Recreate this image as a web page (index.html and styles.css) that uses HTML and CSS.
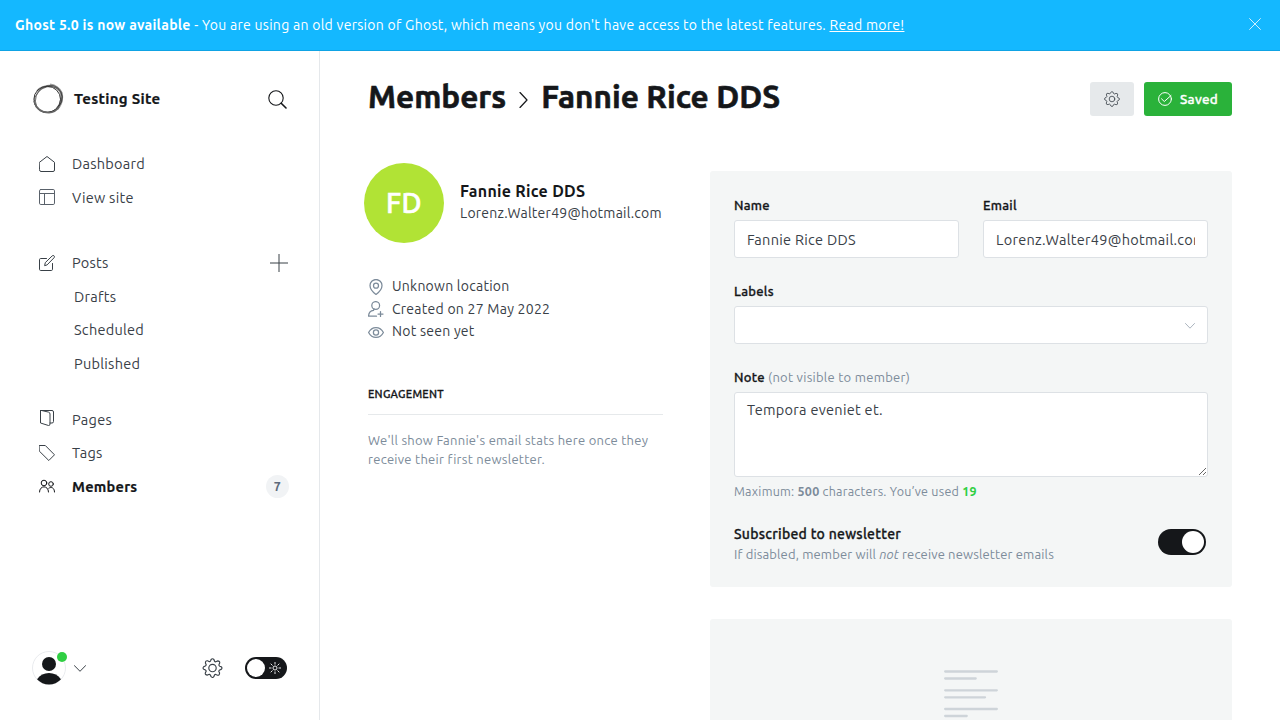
FILE: index.html
```html
<!DOCTYPE html>
<html lang="en">
<head>
<meta charset="utf-8">
<title>Members - Testing Site</title>
<link rel="stylesheet" href="styles.css">
</head>
<body>
<div class="banner">
  <p class="banner-text"><strong>Ghost 5.0 is now available</strong><span> - You are using an old version of Ghost, which means you don't have access to the latest features. </span><a href="#">Read more!</a></p>
  <svg class="banner-close" viewBox="0 0 12 12"><path d="M.3.3l11.4 11.4M11.7.3L.3 11.7"/></svg>
</div>
<div class="app">
  <nav class="sidebar">
    <div class="site">
      <svg class="site-logo" viewBox="0 0 32 32"><g fill="none" stroke="#333"><path d="M18 1.800Q26 3 29.300 10Q31.200 19 25 26" stroke="#999" stroke-width="2.800"/><path d="M5 8Q9 3 20 2.500" stroke="#999" stroke-width="2"/><ellipse cx="15.200" cy="16.300" rx="13.300" ry="13" stroke-width="1"/><ellipse cx="16.600" cy="15.500" rx="12.600" ry="14.400" stroke-width=".6" transform="rotate(40 16 16)"/><ellipse cx="16" cy="16.600" rx="14.500" ry="12.400" stroke-width=".6" transform="rotate(-32 16 16)"/><path d="M2 18Q5.500 29.500 17 29.700Q23 29.500 27 24" stroke="#666" stroke-width="1.600"/></g></svg>
      <span class="site-name">Testing Site</span>
      <svg class="icon search" viewBox="0 0 19 19"><circle cx="8" cy="8" r="7.200"/><path d="M13.200 13.200L18 18" stroke-width="1.600"/></svg>
    </div>
    <ul class="nav">
      <li><svg class="icon" viewBox="0 0 16 16"><path d="M.5 6.300L8 .5l7.500 5.800V14a1.500 1.500 0 0 1-1.500 1.500H2A1.500 1.500 0 0 1 .5 14z"/></svg><span>Dashboard</span></li>
      <li><svg class="icon view" viewBox="0 0 16 16"><rect x=".5" y=".5" width="15" height="15" rx="1.300"/><path d="M.5 4.500h15M5.500 4.500v11"/></svg><span>View site</span></li>
    </ul>
    <ul class="nav">
      <li><svg class="icon" viewBox="0 0 16 16"><path d="M7.500 3.500H1.700A1.200 1.200 0 0 0 .5 4.700v9.600a1.200 1.200 0 0 0 1.200 1.200h10.600a1.200 1.200 0 0 0 1.200-1.200V8.500M5.700 10.300l.6-2.700L13.200.9a1.200 1.200 0 0 1 1.900 1.800L8.400 9.600z"/></svg><span>Posts</span><svg class="icon plus" viewBox="0 0 18 18"><path d="M9 0v18M0 9h18"/></svg></li>
      <li class="sub">Drafts</li>
      <li class="sub">Scheduled</li>
      <li class="sub">Published</li>
    </ul>
    <ul class="nav nav-last">
      <li><svg class="icon pages" viewBox="0 0 16 16"><path d="M1.500.5H13A1.500 1.500 0 0 1 14.500 2v9.500A1.500 1.500 0 0 1 13 13h-2M1.500.5V13l8 2.500q1.500.2 1.500-1.500V4Q11 2.500 9.500 2.100L3 .6"/></svg><span>Pages</span></li>
      <li><svg class="icon" viewBox="0 0 16 16"><path d="M.5.5h5.800l9.200 9.300-5.700 5.700L.5 6.300z"/></svg><span>Tags</span></li>
      <li class="active"><svg class="icon" viewBox="0 0 16 16"><circle cx="5" cy="5" r="2.800"/><circle cx="12" cy="6" r="2.300"/><path d="M.5 14c0-7 9-7 9 0M9.800 10.200c3-2 5.700 0 5.700 3.800"/></svg><span>Members</span><b class="count">7</b></li>
    </ul>
    <div class="user-bar">
      <div class="user"><svg viewBox="0 0 34 34"><circle cx="17" cy="17" r="16.500" fill="#fff" stroke="#e9ebee"/><circle cx="17" cy="13" r="7" fill="#15171a"/><path d="M5 28.300Q9.500 22 17 22t12 6.300A16.300 16.300 0 0 1 5 28.300z" fill="#15171a"/></svg><i class="online"></i></div>
      <svg class="icon chevron" viewBox="0 0 12 7"><path d="M.3.5L6 6.300 11.700.5"/></svg>
      <svg class="icon gear" viewBox="0 0 20 20"><circle cx="10" cy="10" r="3.700"/><path d="M8.600 1.500Q10 0 11.400 1.500L12 3.200Q12.700 4.200 13.800 3.500L15 2.900Q17.500 3 17.200 5L16.500 6.500Q16 7.500 17.200 8.200L18.700 8.800Q20.200 10 18.700 11.400L17.200 12Q16 12.700 16.500 13.800L17.100 15Q17 17.500 15 17.200L13.500 16.500Q12.500 16 11.900 17.200L11.300 18.700Q10 20.200 8.600 18.700L8 17.200Q7.300 16 6.200 16.500L5 17.100Q2.500 17 2.800 15L3.500 13.500Q4 12.500 2.800 11.900L1.300 11.300Q-.2 10 1.300 8.600L2.800 8Q4 7.300 3.500 6.200L2.900 5Q3 2.500 5 2.800L6.500 3.500Q7.500 4 8.100 2.800z"/></svg>
      <div class="theme-switch"><i></i><svg viewBox="0 0 12 12"><circle cx="6" cy="6" r="2"/><path d="M6 0v2.500M6 9.500V12M0 6h2.500M9.500 6H12M1.700 1.700l1.800 1.800M8.500 8.500l1.800 1.800M10.300 1.700L8.500 3.500M3.500 8.500l-1.800 1.800"/></svg></div>
    </div>
  </nav>
  <main class="content">
    <header class="page-head">
      <h1><span>Members</span><svg class="icon crumb" viewBox="0 0 9 16"><path d="M1 .5l7 7.500-7 7.500"/></svg><span>Fannie Rice DDS</span></h1>
      <button class="btn settings"><svg class="icon" viewBox="0 0 20 20"><circle cx="10" cy="10" r="3.500"/><path d="M8.600 1.500Q10 0 11.400 1.500L12 3.200Q12.700 4.200 13.800 3.500L15 2.900Q17.500 3 17.200 5L16.500 6.500Q16 7.500 17.200 8.200L18.700 8.800Q20.200 10 18.700 11.400L17.200 12Q16 12.700 16.500 13.800L17.100 15Q17 17.500 15 17.200L13.500 16.500Q12.500 16 11.900 17.200L11.300 18.700Q10 20.200 8.600 18.700L8 17.200Q7.300 16 6.200 16.500L5 17.100Q2.500 17 2.800 15L3.500 13.500Q4 12.500 2.800 11.900L1.300 11.300Q-.2 10 1.300 8.600L2.800 8Q4 7.300 3.500 6.200L2.900 5Q3 2.500 5 2.800L6.500 3.500Q7.500 4 8.100 2.800z"/></svg></button>
      <button class="btn saved"><svg class="icon" viewBox="0 0 14 14"><circle cx="7" cy="7" r="6.400"/><path d="M3.500 6.800L6.300 9.500 13 3.500"/></svg><span>Saved</span></button>
    </header>
    <div class="columns">
      <aside class="profile">
        <div class="identity">
          <div class="avatar">FD</div>
          <div><h3>Fannie Rice DDS</h3><p>Lorenz.Walter49@hotmail.com</p></div>
        </div>
        <ul class="facts">
          <li><svg class="icon" viewBox="0 0 16 16"><path d="M8 15.500C6 14 2 10 2 6.500a6 6 0 0 1 12 0C14 10 10 14 8 15.500z"/><circle cx="8" cy="6.700" r="2.500"/></svg><span>Unknown location</span></li>
          <li><svg class="icon" viewBox="0 0 16 16"><circle cx="7.700" cy="4.500" r="3.900"/><path d="M8.500 15.200H.6c0-3.500 1.700-5.500 5-5.900l.4-1.500M12.500 10.500v5M10 13h5"/></svg><span>Created on 27 May 2022</span></li>
          <li><svg class="icon" viewBox="0 0 16 16"><path d="M.6 8.500C4 2 12 2 15.400 8.500 12 15 4 15 .6 8.500z"/><circle cx="8" cy="8.500" r="2.600"/></svg><span>Not seen yet</span></li>
        </ul>
        <h4>ENGAGEMENT</h4>
        <p class="stats">We'll show Fannie's email stats here once they<br>receive their first newsletter.</p>
      </aside>
      <section class="details">
        <div class="panel">
          <div class="pair">
            <div class="field"><label for="name">Name</label><input id="name" value="Fannie Rice DDS"></div>
            <div class="field"><label for="email">Email</label><input id="email" value="Lorenz.Walter49@hotmail.com"></div>
          </div>
          <div class="field labels"><label>Labels</label><div class="select"><svg class="icon" viewBox="0 0 10 6"><path d="M.5.5L5 5.200 9.500.5"/></svg></div></div>
          <div class="field note"><label for="note">Note <span>(not visible to member)</span></label><textarea id="note">Tempora eveniet et.</textarea><p class="limit">Maximum: <b>500</b> characters. You’ve used <b class="used">19</b></p></div>
          <div class="subscribe">
            <div><h5>Subscribed to newsletter</h5><p>If disabled, member will <em>not</em> receive newsletter emails</p></div>
            <div class="toggle"><i></i></div>
          </div>
        </div>
        <div class="panel empty"><svg viewBox="0 0 54 50"><path d="M1.200 1.500h51.600M1.200 8.500h30.500M1.200 20.300h51.600M1.200 27.300h39.800M1.200 39h51.600M1.200 46h21.500"/></svg></div>
      </section>
    </div>
  </main>
</div>
</body>
</html>
```
FILE: styles.css
```css
* { box-sizing: border-box; margin: 0; padding: 0; }
body { height: 720px; overflow: hidden; display: flex; flex-direction: column; background: #fff; color: #15171a; font-family: Ubuntu, "Noto Sans", "Open Sans", sans-serif; font-size: 14px; letter-spacing: .27px; }
ul { list-style: none; }
svg { display: block; flex: none; }
p, h1, h3, h4, h5, li, label { white-space: nowrap; }
.icon { fill: none; stroke: currentColor; stroke-width: 1; stroke-linecap: round; stroke-linejoin: round; width: 16px; height: 16px; }

.banner { height: 51px; flex: none; display: flex; align-items: center; justify-content: space-between; padding: 0 19px 2px 15px; background: #14b8ff; border-bottom: 1px solid #0fa3e4; color: #fff; }
.banner-text { padding-top: 2px; font-size: 14px; letter-spacing: .28px; }
.banner-text a { color: #fff; text-underline-offset: 1px; }
.banner-close { width: 12px; height: 12px; fill: none; stroke: #fff; stroke-width: .8; }

.app { display: flex; flex: 1; min-height: 0; }
.sidebar { width: 320px; flex: none; display: flex; flex-direction: column; padding: 24px 32px 26px; border-right: 1px solid #e5e8eb; }
.site { display: flex; align-items: center; height: 48px; margin-bottom: 24px; }
.site-logo { width: 32px; height: 32px; }
.site-name { margin-left: 10px; padding-bottom: 2px; font-size: 15px; font-weight: 700; -webkit-text-stroke: .2px; }
.search { width: 19px; height: 19px; margin: 0 0 0 auto; stroke-width: 1.1; }
.nav { margin-bottom: 32.1px; color: #394047; }
.nav + .nav { margin-bottom: 22.5px; }
.nav li { display: flex; align-items: center; height: 33.5px; padding-left: 7px; font-size: 14.5px; }
.nav li span { margin-left: 17px; }
.nav .sub { padding-left: 42px; }
.nav .pages { margin-top: -2px; }
.nav .view { stroke: #59616a; }
.plus { width: 18px; height: 18px; margin: 0 -1px 0 auto; }
.nav .active { color: #15171a; font-weight: 700; }
.nav .active span { -webkit-text-stroke: .2px; }
.count { width: 23px; height: 23px; margin: 0 -2px 0 auto; border-radius: 50%; background: #f1f3f5; color: #5d6a7b; font-size: 12.5px; font-weight: 600; line-height: 23px; text-align: center; }
.user-bar { display: flex; align-items: center; height: 52px; margin-top: auto; color: #394047; }
.user { position: relative; width: 34px; height: 34px; }
.online { position: absolute; right: -1px; top: 1px; width: 10px; height: 10px; border-radius: 50%; background: #30cf43; }
.chevron { width: 12px; height: 7px; margin-left: 8px; }
.gear { width: 21px; height: 20px; margin-left: 116px; stroke-width: 1.15; }
.theme-switch { display: flex; align-items: center; justify-content: space-between; width: 42px; height: 22px; margin-left: 22px; padding: 0 6px 0 2px; border-radius: 11px; background: #15171a; }
.theme-switch i { width: 18px; height: 18px; border-radius: 50%; background: #fff; }
.theme-switch svg { width: 12px; height: 12px; fill: none; stroke: #fff; stroke-width: .9; }

.content { flex: 1; min-width: 0; overflow: hidden; padding: 31px 48px 0; }
.page-head { display: flex; align-items: center; height: 34px; }
h1 { display: flex; align-items: center; margin-right: auto; padding-bottom: 5px; font-size: 31.5px; font-weight: 700; line-height: 40px; letter-spacing: 0; -webkit-text-stroke: .6px; }
.crumb { width: 9px; height: 16px; margin: 7px 13px 0 13px; stroke-width: 1.2; }
.btn { display: flex; align-items: center; justify-content: center; height: 34px; border: 0; border-radius: 3px; font: 500 13.5px Ubuntu, "Noto Sans", sans-serif; letter-spacing: .27px; }
.settings { width: 44px; margin-right: 10px; background: #e6e9eb; color: #394047; }
.saved { width: 88px; background: #2ab23a; color: #fff; }
.saved span { -webkit-text-stroke: .35px; }
.saved .icon { width: 14px; height: 14px; margin-right: 8px; }

.columns { display: flex; justify-content: space-between; }
.profile { width: 295px; padding-top: 47px; }
.identity { display: flex; align-items: center; margin-left: -4px; }
.avatar { width: 80px; height: 80px; margin-right: 16px; border-radius: 50%; background: #b1e335; color: #fff; font-size: 28px; font-weight: 500; line-height: 80px; text-align: center; -webkit-text-stroke: .6px; }
.identity h3 { font-size: 16px; font-weight: 700; line-height: 22px; }
.identity p { color: #394047; font-size: 14px; line-height: 22px; letter-spacing: .25px; }
.identity > div:last-child { padding-bottom: 2px; }
.facts { margin-top: 32px; color: #394047; }
.facts li { display: flex; align-items: center; height: 22.5px; letter-spacing: .25px; }
.facts .icon { margin: 1px 8px 0 0; color: #7c8b9a; stroke-width: 1.25; }
h4 { height: 32px; margin-top: 40px; border-bottom: 1px solid #e6e9eb; font-size: 11px; font-weight: 500; line-height: 22px; -webkit-text-stroke: .3px; }
.stats { margin-top: 16px; color: #7c8b9a; font-size: 13px; line-height: 19px; }

.details { width: 522px; padding-top: 55px; }
.panel { height: 416px; padding: 24px; border-radius: 3px; background: #f4f6f6; }
.pair { display: grid; grid-template-columns: 1fr 1fr; gap: 24px; height: 86px; }
.field { margin-bottom: 24px; }
.pair .field { min-width: 0; margin-bottom: 0; }
label { display: block; height: 25px; font-size: 13px; font-weight: 500; line-height: 20px; -webkit-text-stroke: .3px; }
label span { color: #7c8b9a; font-weight: 400; -webkit-text-stroke: 0; }
input, .select, textarea { display: block; width: 100%; height: 38px; padding: 0 12px; border: 1px solid #dde1e5; border-radius: 3px; background: #fff; color: #394047; font: 14.5px Ubuntu, "Noto Sans", sans-serif; letter-spacing: .29px; }
.select { display: flex; align-items: center; justify-content: flex-end; padding-right: 12px; }
.select .icon { width: 10px; height: 6px; margin-top: 1px; color: #abb4be; }
.labels { height: 62px; }
textarea { height: 85px; padding-top: 7px; line-height: 20px; resize: vertical; }
.note { margin-bottom: 22px; }
.limit { margin-top: 5px; color: #7c8b9a; font-size: 12.5px; line-height: 18px; letter-spacing: .25px; }
.used { color: #30cf43; }
.subscribe { display: flex; align-items: center; justify-content: space-between; height: 42px; padding-right: 2px; }
.subscribe h5 { margin: 1px 0 -1px; font-size: 14px; font-weight: 500; line-height: 21px; -webkit-text-stroke: .3px; }
.subscribe p { color: #7c8b9a; font-size: 13px; line-height: 20px; letter-spacing: .14px; }
.toggle { display: flex; align-items: center; justify-content: flex-end; width: 48px; height: 26px; margin-bottom: 2px; padding-right: 2px; border-radius: 13px; background: #15171a; }
.toggle i { width: 22px; height: 22px; border-radius: 50%; background: #fff; }
.panel.empty { display: flex; justify-content: center; height: 101px; margin-top: 32px; padding: 51px 24px 0; border-radius: 3px 3px 0 0; }
.empty svg { width: 54px; height: 50px; fill: none; stroke: #ced4d9; stroke-width: 2.3; stroke-linecap: round; }
```
